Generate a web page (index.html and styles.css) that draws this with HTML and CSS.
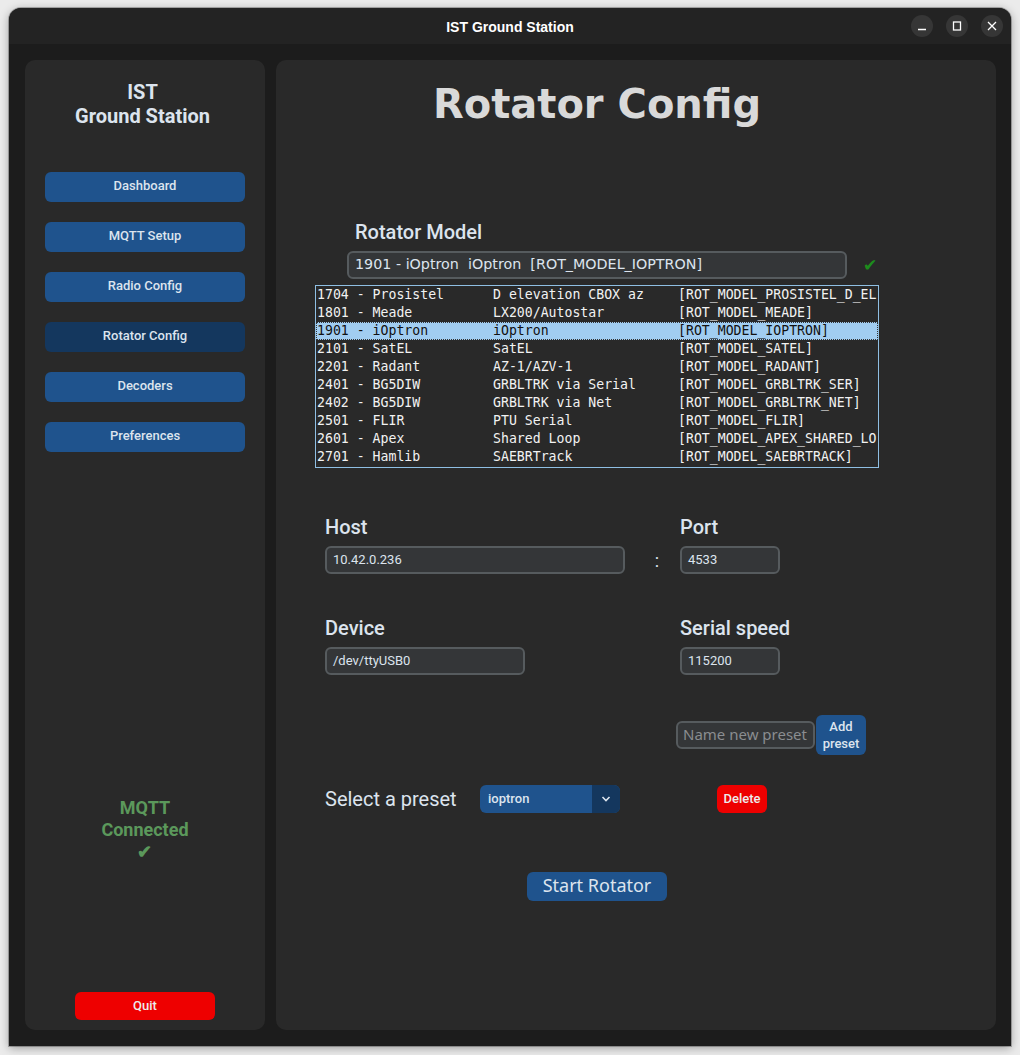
FILE: index.html
```html
<!DOCTYPE html>
<html>
<head>
<meta charset="utf-8">
<link rel="stylesheet" href="styles.css">
</head>
<body>
<div class="window">
  <header class="titlebar">
    <div></div>
    <div class="wtitle">IST Ground Station</div>
    <div class="controls">
      <span class="wbtn"><svg width="10" height="10" viewBox="0 0 10 10"><path d="M1 8.5h8" stroke="#fff" stroke-width="1.3"/></svg></span>
      <span class="wbtn"><svg width="10" height="10" viewBox="0 0 10 10"><rect x="1.5" y="1" width="7" height="8" fill="none" stroke="#fff" stroke-width="1.3"/></svg></span>
      <span class="wbtn"><svg width="10" height="10" viewBox="0 0 10 10"><path d="M1 1L9 9M9 1L1 9" stroke="#fff" stroke-width="1.3"/></svg></span>
    </div>
  </header>
  <div class="content">
    <aside class="sidebar">
      <div class="brand">IST<br>Ground Station</div>
      <nav class="nav">
        <div class="navbtn">Dashboard</div>
        <div class="navbtn">MQTT Setup</div>
        <div class="navbtn">Radio Config</div>
        <div class="navbtn active">Rotator Config</div>
        <div class="navbtn">Decoders</div>
        <div class="navbtn">Preferences</div>
      </nav>
      <div class="mqtt">MQTT<br>Connected<br>✔</div>
      <div class="quit">Quit</div>
    </aside>
    <main class="main">
      <h1 class="title">Rotator Config</h1>
      <div class="model-label">Rotator Model</div>
      <div class="combo-row">
        <div class="combo">1901 - iOptron&nbsp; iOptron&nbsp; [ROT_MODEL_IOPTRON]</div>
        <span class="check">✔</span>
      </div>
      <div class="listbox">
        <div class="lrow"><span>1704 - Prosistel</span><span>D elevation CBOX az</span><span>[ROT_MODEL_PROSISTEL_D_EL</span></div>
        <div class="lrow"><span>1801 - Meade</span><span>LX200/Autostar</span><span>[ROT_MODEL_MEADE]</span></div>
        <div class="lrow sel"><span>1901 - iOptron</span><span>iOptron</span><span>[ROT_MODEL_IOPTRON]</span></div>
        <div class="lrow"><span>2101 - SatEL</span><span>SatEL</span><span>[ROT_MODEL_SATEL]</span></div>
        <div class="lrow"><span>2201 - Radant</span><span>AZ-1/AZV-1</span><span>[ROT_MODEL_RADANT]</span></div>
        <div class="lrow"><span>2401 - BG5DIW</span><span>GRBLTRK via Serial</span><span>[ROT_MODEL_GRBLTRK_SER]</span></div>
        <div class="lrow"><span>2402 - BG5DIW</span><span>GRBLTRK via Net</span><span>[ROT_MODEL_GRBLTRK_NET]</span></div>
        <div class="lrow"><span>2501 - FLIR</span><span>PTU Serial</span><span>[ROT_MODEL_FLIR]</span></div>
        <div class="lrow"><span>2601 - Apex</span><span>Shared Loop</span><span>[ROT_MODEL_APEX_SHARED_LO</span></div>
        <div class="lrow"><span>2701 - Hamlib</span><span>SAEBRTrack</span><span>[ROT_MODEL_SAEBRTRACK]</span></div>
      </div>
      <div class="fields">
        <div class="flabel">Host</div>
        <div></div>
        <div class="flabel">Port</div>
        <div class="entry w300">10.42.0.236</div>
        <div class="colon">:</div>
        <div class="entry w100">4533</div>
      </div>
      <div class="fields second">
        <div class="flabel">Device</div>
        <div></div>
        <div class="flabel">Serial speed</div>
        <div class="entry w200">/dev/ttyUSB0</div>
        <div></div>
        <div class="entry w100">115200</div>
      </div>
      <div class="preset-new">
        <div class="entry placeholder">Name new preset</div>
        <div class="addbtn">Add<br>preset</div>
      </div>
      <div class="preset-row">
        <div class="plabel">Select a preset</div>
        <div class="option">
          <span class="optval">ioptron</span>
          <span class="optarrow"><svg width="10" height="6" viewBox="0 0 10 6"><path d="M1.5 1L5 4.5L8.5 1" fill="none" stroke="#dce4ee" stroke-width="1.6"/></svg></span>
        </div>
        <div class="delete">Delete</div>
      </div>
      <div class="start">Start Rotator</div>
    </main>
  </div>
</div>
</body>
</html>
```

FILE: styles.css
```css
html, body { margin: 0; padding: 0; }
body {
  background: #ebebeb;
  padding: 8px 0 0 9px;
  height: 1055px;
  box-sizing: border-box;
  overflow: hidden;
  font-family: Roboto, "Noto Sans", sans-serif;
}
.window {
  width: 1002px;
  height: 1038px;
  background: #1c1c1c;
  border-radius: 12px 12px 0 0;
  box-shadow: 0 2px 10px rgba(0,0,0,0.35), 0 0 0 1px rgba(0,0,0,0.25);
  display: flex;
  flex-direction: column;
  overflow: hidden;
}
.titlebar {
  height: 36px;
  flex: none;
  background: #232323;
  display: grid;
  grid-template-columns: 1fr auto 1fr;
  align-items: center;
}
.wtitle {
  font-family: "Liberation Sans", sans-serif;
  font-weight: bold;
  font-size: 14px;
  color: #ffffff;
  padding-top: 2px;
}
.controls {
  display: flex;
  justify-content: flex-end;
  gap: 13px;
  padding-right: 8px;
}
.wbtn {
  width: 22px;
  height: 22px;
  border-radius: 50%;
  background: #363636;
  display: flex;
  align-items: center;
  justify-content: center;
}
.content {
  flex: 1;
  display: flex;
  gap: 11px;
  padding: 16px 15px 16px 16px;
}
.sidebar {
  width: 240px;
  background: #292929;
  border-radius: 10px;
  display: flex;
  flex-direction: column;
  align-items: center;
}
.brand {
  margin-top: 20px;
  padding-right: 5px;
  font-weight: 700;
  font-size: 20px;
  line-height: 24px;
  color: #dce4ee;
  text-align: center;
}
.nav {
  margin-top: 44px;
  display: flex;
  flex-direction: column;
  gap: 20px;
}
.navbtn {
  width: 200px;
  height: 30px;
  border-radius: 6px;
  background: #1f538d;
  color: #dce4ee;
  font-size: 13px;
  font-weight: 500;
  line-height: 28px;
  text-align: center;
}
.navbtn.active { background: #14375e; }
.mqtt {
  margin-top: 345px;
  font-weight: 700;
  font-size: 18px;
  line-height: 22px;
  color: #5b985b;
  text-align: center;
}
.quit {
  margin-top: 129px;
  width: 140px;
  height: 28px;
  border-radius: 6px;
  background: #ee0000;
  color: #ececec;
  font-size: 13px;
  font-weight: 500;
  line-height: 27px;
  text-align: center;
}
.main {
  flex: 1;
  background: #292929;
  border-radius: 10px;
  padding-left: 49px;
  box-sizing: border-box;
}
.title {
  margin: 20px 0 0 0;
  width: 544px;
  text-align: center;
  font-family: "DejaVu Sans", sans-serif;
  font-weight: bold;
  font-size: 40px;
  line-height: 48px;
  color: #d9d9d9;
}
.model-label {
  margin: 92px 0 0 30px;
  font-size: 20px;
  font-weight: 500;
  line-height: 24px;
  color: #dce4ee;
}
.combo-row {
  margin: 7px 0 0 22px;
  display: flex;
  align-items: center;
  gap: 16px;
}
.combo {
  width: 500px;
  height: 28px;
  box-sizing: border-box;
  border: 2px solid #565b5e;
  border-radius: 6px;
  background: #343638;
  color: #dce4ee;
  font-family: "DejaVu Sans", sans-serif;
  font-size: 14.3px;
  line-height: 23px;
  padding-left: 6px;
  white-space: nowrap;
}
.check {
  color: #1c8c1c;
  font-size: 17px;
  font-family: "DejaVu Sans", sans-serif;
}
.listbox {
  margin: 6px 0 0 -10px;
  width: 564px;
  height: 183px;
  box-sizing: border-box;
  border: 1px solid #8fbfe3;
  padding: 0;
  overflow: hidden;
  font-family: "DejaVu Sans Mono", monospace;
  font-size: 13.2px;
  color: #f2f2f2;
}
.lrow {
  height: 18px;
  line-height: 18px;
  display: grid;
  grid-template-columns: 176px 185px 1fr;
  padding-left: 1px;
  white-space: nowrap;
  overflow: hidden;
  box-sizing: border-box;
}
.lrow span { overflow: hidden; }
.lrow.sel {
  background: #a1cdf1;
  color: #111111;
  outline: 1px dotted #333333;
  outline-offset: -1px;
}
.fields {
  margin-top: 47px;
  display: grid;
  grid-template-columns: 300px 55px 1fr;
  row-gap: 7px;
  align-items: center;
}
.fields.second { margin-top: 42px; }
.flabel {
  font-size: 20px;
  font-weight: 500;
  line-height: 24px;
  color: #dce4ee;
}
.entry {
  height: 28px;
  box-sizing: border-box;
  border: 2px solid #565b5e;
  border-radius: 6px;
  background: #343638;
  color: #dce4ee;
  font-size: 13px;
  padding-left: 6px;
  line-height: 23px;
}
.w300 { width: 300px; }
.w200 { width: 200px; }
.w100 { width: 100px; }
.colon {
  text-align: center;
  padding-left: 9px;
  color: #dce4ee;
  font-size: 18px;
}
.preset-new {
  margin: 40px 0 0 351px;
  display: flex;
  align-items: center;
}
.placeholder {
  width: 139px;
  color: #8a8d90;
  font-family: "Noto Sans", sans-serif;
  font-size: 15px;
  padding-left: 5px;
  white-space: nowrap;
  line-height: 22px;
}
.addbtn {
  margin-left: 1px;
  width: 50px;
  height: 40px;
  border-radius: 6px;
  background: #1f538d;
  color: #dce4ee;
  font-size: 13px;
  font-weight: 500;
  line-height: 17px;
  text-align: center;
  display: flex;
  align-items: center;
  justify-content: center;
}
.preset-row {
  margin-top: 30px;
  display: flex;
  align-items: center;
  height: 28px;
}
.plabel {
  width: 155px;
  font-size: 20px;
  line-height: 24px;
  color: #dce4ee;
}
.option {
  width: 140px;
  height: 28px;
  border-radius: 6px;
  background: #1f538d;
  display: flex;
  overflow: hidden;
}
.optval {
  flex: 1;
  padding-left: 8px;
  color: #dce4ee;
  font-size: 13px;
  font-weight: 500;
  line-height: 27px;
}
.optarrow {
  width: 28px;
  background: #14375e;
  display: flex;
  align-items: center;
  justify-content: center;
}
.delete {
  margin-left: 97px;
  width: 50px;
  height: 28px;
  border-radius: 6px;
  background: #ee0000;
  color: #ececec;
  font-size: 13px;
  font-weight: 500;
  line-height: 27px;
  text-align: center;
}
.start {
  margin: 59px 0 0 202px;
  width: 140px;
  height: 29px;
  border-radius: 6px;
  background: #1f538d;
  color: #dce4ee;
  font-family: "Noto Sans", sans-serif;
  font-size: 18px;
  line-height: 27px;
  text-align: center;
}
```
